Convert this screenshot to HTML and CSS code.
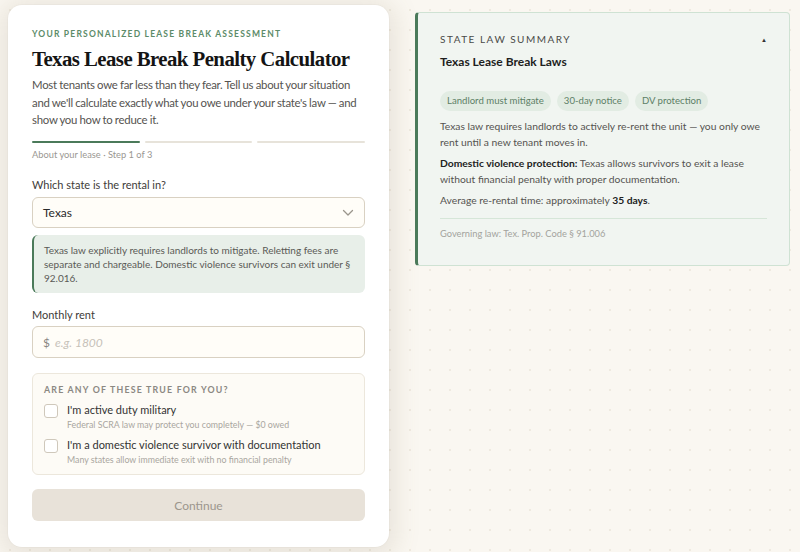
FILE: index.html
```html
<!DOCTYPE html>
<html lang="en">
<head>
<meta charset="utf-8">
<title>Texas Lease Break Penalty Calculator</title>
<link rel="stylesheet" href="styles.css">
</head>
<body>
<div class="page">
  <main class="card">
    <div class="eyebrow">Your personalized lease break assessment</div>
    <h1 class="title">Texas Lease Break Penalty Calculator</h1>
    <p class="lede">Most tenants owe far less than they fear. Tell us about your situation and we'll calculate exactly what you owe under your state's law — and show you how to reduce it.</p>
    <div class="progress">
      <span class="seg active"></span><span class="seg"></span><span class="seg"></span>
    </div>
    <div class="step">About your lease · Step 1 of 3</div>

    <label class="field-label">Which state is the rental in?</label>
    <div class="select">
      <span>Texas</span>
      <svg class="chev" width="12" height="8" viewBox="0 0 12 8"><path d="M1.5 1.5 L6 6 L10.5 1.5" fill="none" stroke="#9a958c" stroke-width="1.3" stroke-linecap="round" stroke-linejoin="round"/></svg>
    </div>
    <div class="note">Texas law explicitly requires landlords to mitigate. Reletting fees are separate and chargeable. Domestic violence survivors can exit under § 92.016.</div>

    <label class="field-label rent-label">Monthly rent</label>
    <div class="input"><span class="dollar">$</span><span class="ph">e.g. 1800</span></div>

    <div class="checks">
      <div class="checks-title">Are any of these true for you?</div>
      <div class="check">
        <span class="box"></span>
        <div>
          <div class="check-label">I'm active duty military</div>
          <div class="check-sub">Federal SCRA law may protect you completely — $0 owed</div>
        </div>
      </div>
      <div class="check">
        <span class="box"></span>
        <div>
          <div class="check-label">I'm a domestic violence survivor with documentation</div>
          <div class="check-sub">Many states allow immediate exit with no financial penalty</div>
        </div>
      </div>
    </div>

    <button class="continue">Continue</button>
  </main>

  <aside class="summary">
    <div class="summary-head">
      <span class="summary-kicker">State law summary</span>
      <span class="caret">▲</span>
    </div>
    <div class="summary-title">Texas Lease Break Laws</div>
    <div class="pills">
      <span class="pill">Landlord must mitigate</span>
      <span class="pill">30-day notice</span>
      <span class="pill">DV protection</span>
    </div>
    <p class="sum-p">Texas law requires landlords to actively re-rent the unit — you only owe rent until a new tenant moves in.</p>
    <p class="sum-p"><strong>Domestic violence protection:</strong> Texas allows survivors to exit a lease without financial penalty with proper documentation.</p>
    <p class="sum-p">Average re-rental time: approximately <strong>35 days</strong>.</p>
    <div class="gov">Governing law: Tex. Prop. Code § 91.006</div>
  </aside>
</div>
</body>
</html>
```

FILE: styles.css
```css
* { box-sizing: border-box; }
html, body { margin: 0; padding: 0; }
body {
  width: 800px;
  height: 552px;
  overflow: hidden;
  font-family: Lato, "Liberation Sans", sans-serif;
  color: #2a2a2a;
  background-color: #faf7f1;
  background-image: radial-gradient(circle, #efeae0 1px, transparent 1.4px);
  background-size: 20px 20px;
}
.page {
  display: flex;
  align-items: flex-start;
  gap: 26px;
  padding: 5px 10px 0 8px;
}
.card {
  width: 381px;
  height: 542px;
  flex: none;
  background: #ffffff;
  border-radius: 14px;
  box-shadow: 0 0 0 1px rgba(0,0,0,0.02), 0 4px 24px 8px rgba(120,105,80,0.13);
  padding: 24px 24px 0 24px;
}
.eyebrow {
  font-size: 8.5px;
  letter-spacing: 1.2px;
  text-transform: uppercase;
  color: #5c8b69;
  font-weight: 700;
  line-height: 10px;
}
.title {
  font-family: "Liberation Serif", "DejaVu Serif", serif;
  font-weight: 700;
  font-size: 20.8px;
  line-height: 28px;
  margin: 6px 0 3px 0;
  color: #141414;
  letter-spacing: -0.55px;
  white-space: nowrap;
}
.lede {
  margin: 0;
  font-size: 11.4px;
  letter-spacing: -0.26px;
  word-spacing: -0.3px;
  line-height: 17.5px;
  color: #555350;
}
.progress {
  display: flex;
  gap: 5px;
  margin-top: 12px;
}
.seg {
  flex: 1;
  height: 2px;
  background: #e7e3da;
  border-radius: 1px;
}
.seg.active { background: #4b7a5a; }
.step {
  font-size: 9.3px;
  color: #9a9792;
  margin-top: 6px;
  line-height: 11px;
}
.field-label {
  display: block;
  font-size: 11px;
  color: #3e3c39;
  margin-top: 18px;
  line-height: 13px;
}
.select {
  margin-top: 6px;
  height: 31px;
  border: 1px solid #d9d1c2;
  border-radius: 6px;
  background: #fffdf8;
  display: flex;
  align-items: center;
  justify-content: space-between;
  padding: 0 10px 0 10px;
  font-size: 12px;
  color: #2a2a2a;
}
.chev { margin-top: 1px; }
.note {
  margin-top: 7px;
  background: #e8efe9;
  border-left: 2px solid #4b7a5a;
  border-radius: 6px;
  padding: 8px 12px 8px 10px;
  font-size: 10px;
  line-height: 14.3px;
  color: #5a5a56;
}
.rent-label { margin-top: 15px; }
.input {
  margin-top: 5px;
  height: 32px;
  border: 1px solid #d9d1c2;
  border-radius: 6px;
  background: #fffdf8;
  display: flex;
  align-items: center;
  padding: 0 10px;
  font-size: 12px;
}
.dollar { color: #8a8782; margin-right: 5px; }
.ph { color: #c6c1b8; font-style: italic; }
.checks {
  margin-top: 15px;
  border: 1px solid #ece7dc;
  border-radius: 6px;
  background: #fdfbf6;
  padding: 10px 11px 8px 11px;
}
.checks-title {
  font-size: 8.8px;
  letter-spacing: 1.2px;
  text-transform: uppercase;
  color: #8b8882;
  font-weight: 700;
  line-height: 11px;
}
.check {
  display: flex;
  gap: 9px;
  margin-top: 8px;
}
.check + .check { margin-top: 7px; }
.box {
  flex: none;
  width: 14px;
  height: 14px;
  border: 1px solid #cfc8bb;
  border-radius: 3px;
  background: #fff;
  margin-top: 1px;
}
.check-label {
  font-size: 11px;
  line-height: 14px;
  color: #333;
}
.check-sub {
  font-size: 8.8px;
  line-height: 13px;
  color: #a9a69f;
  margin-top: 1px;
}
.continue {
  display: block;
  width: 100%;
  margin-top: 14px;
  height: 32px;
  border: none;
  border-radius: 6px;
  background: #e8e2d9;
  color: #9c968d;
  font-family: inherit;
  font-size: 12px;
}

.summary {
  width: 375px;
  flex: none;
  margin-top: 7px;
  background: #f1f5f1;
  border: 1px solid #cfe2d3;
  border-left: 3px solid #4b7a5a;
  border-radius: 4px;
  padding: 20px 22px 25px 22px;
}
.summary-head {
  display: flex;
  justify-content: space-between;
  align-items: center;
}
.summary-kicker {
  font-size: 10px;
  letter-spacing: 1.5px;
  text-transform: uppercase;
  color: #4a4a48;
  line-height: 12px;
}
.caret {
  font-size: 6px;
  color: #333;
}
.summary-title {
  margin-top: 10px;
  font-size: 12px;
  font-weight: 700;
  color: #1e1e1e;
  line-height: 14px;
}
.pills {
  display: flex;
  gap: 6px;
  margin-top: 22px;
}
.pill {
  background: #e2ece3;
  color: #5d7f66;
  font-size: 9.6px;
  line-height: 12px;
  padding: 4px 7px;
  border-radius: 10px;
}
.sum-p {
  margin: 7px 0 0 0;
  font-size: 10.3px;
  line-height: 16px;
  color: #555350;
}
.sum-p + .sum-p { margin-top: 5px; }
.sum-p strong { color: #222; font-weight: 700; }
.gov {
  margin-top: 10px;
  border-top: 1px solid #d6e6d8;
  padding-top: 9px;
  font-size: 9.3px;
  color: #a3a39d;
  line-height: 12px;
}
```
